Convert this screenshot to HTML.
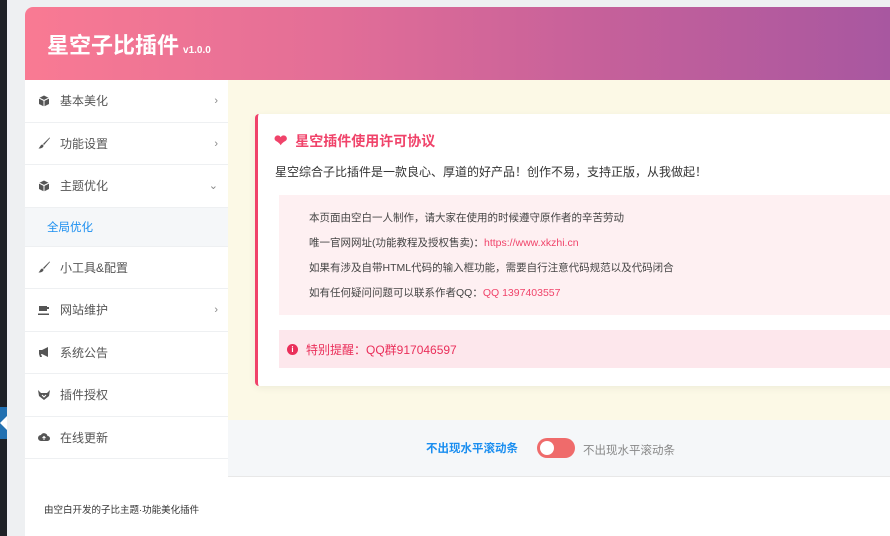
<!DOCTYPE html>
<html><head><meta charset="utf-8">
<style>
*{margin:0;padding:0;box-sizing:border-box}
html,body{width:890px;height:536px;overflow:hidden}
body{background:#eef0f2;font-family:"Liberation Sans","Noto Sans CJK SC",sans-serif;position:relative}
.dark{position:absolute;left:0;top:0;width:7px;height:536px;background:#1f2227}
.arrow{position:absolute;left:0;top:407px;width:7px;height:32px;background:#2271b1}
.arrow:after{content:"";position:absolute;left:0;top:9px;border-right:7px solid #fff;border-top:7px solid transparent;border-bottom:7px solid transparent}
.wrap{position:absolute;left:25px;top:7px;width:865px;height:529px;background:#fff;border-radius:8px 0 0 0;overflow:hidden}
.hdr{height:73px;background:linear-gradient(90deg,#f97a93 0%,#e36e97 35%,#c7619a 65%,#a857a0 100%);position:relative}
.hdr h1{position:absolute;left:22px;top:21px;color:#fff;font-size:22px;font-weight:bold}
.hdr h1 small{font-size:10px;margin-left:4px}
.side{position:absolute;left:0;top:73px;width:203px;height:397px;background:#fff}
.it{height:42.5px;border-bottom:1px solid #eef0f2;display:flex;align-items:center;padding-left:13px;font-size:12px;color:#555;position:relative}
.it .ic{width:12px;height:12px;margin-right:10px;display:inline-block;color:#555}
.it .ch{position:absolute;right:10px;top:0;line-height:42px;font-size:11px;color:#888}
.sub{height:39px;background:#f5f7f9;color:#1a8ef0;font-size:11.5px;display:flex;align-items:center;padding-left:22px;border-bottom:1px solid #eef0f2}
.main{position:absolute;left:203px;top:73px;width:672px;height:340px;background:#fcf9e6}
.card{position:absolute;left:27px;top:34px;width:650px;height:272px;background:#fff;border-left:3px solid #f0436a;border-radius:4px;box-shadow:0 2px 8px rgba(0,0,0,.06)}
.card h2{position:absolute;left:16px;top:17px;font-size:14px;color:#f0436a;font-weight:bold}
.card h2 span{font-size:16px;margin-right:4px}
.card p.l{position:absolute;left:17px;top:49px;font-size:12px;color:#333}
.box{position:absolute;left:21px;top:81px;width:640px;height:120px;background:#fef0f2;padding:11px 0 0 30px;font-size:10.5px;color:#444;line-height:25px}
.box a{color:#f0436a;text-decoration:none}
.tip{position:absolute;left:21px;top:216px;width:640px;height:38px;background:#fde7ec;padding-left:8px;font-size:12px;color:#ea2f5a;display:flex;align-items:center}
.tip i{display:inline-block;width:11px;height:11px;border-radius:50%;background:#ea2f5a;color:#fff;font-size:8px;font-style:normal;text-align:center;line-height:11px;margin-right:8px;font-weight:bold}
.bar{position:absolute;left:203px;top:413px;width:672px;height:57px;background:#f5f7f9;border-bottom:1px solid #e8e8e8}
.bar .a{position:absolute;left:198px;top:20px;font-size:11.5px;color:#1a8ef0;font-weight:bold}
.tg{position:absolute;left:309px;top:18px;width:38px;height:20px;border-radius:10px;background:#ef6b6b}
.tg:after{content:"";position:absolute;left:3px;top:3px;width:14px;height:14px;border-radius:50%;background:#fff}
.bar .b{position:absolute;left:355px;top:22px;font-size:11.5px;color:#888}
.foot{position:absolute;left:19px;top:495px;font-size:9.5px;color:#333}
</style></head><body>
<div class="dark"></div><div class="arrow"></div>
<div class="wrap">
<div class="hdr"><h1>星空子比插件<small>v1.0.0</small></h1></div>
<div class="side">
<div class="it"><svg class="ic" viewBox="0 0 12 12"><path d="M6 0.5L11 3v6L6 11.5 1 9V3z" fill="#555"/><path d="M6 5.5L11 3M6 5.5L1 3M6 5.5v6" stroke="#fff" stroke-width="1" fill="none"/></svg>基本美化<span class="ch">›</span></div>
<div class="it"><svg class="ic" viewBox="0 0 12 12"><path d="M11.5 0.5L5 7l1 1 6-7z M4.5 7.5c-2 0-2 2-4 4 3 0 5-1 5-3z" fill="#555"/></svg>功能设置<span class="ch">›</span></div>
<div class="it"><svg class="ic" viewBox="0 0 12 12"><path d="M6 0.5L11 3v6L6 11.5 1 9V3z" fill="#555"/><path d="M6 5.5L11 3M6 5.5L1 3M6 5.5v6" stroke="#fff" stroke-width="1" fill="none"/></svg>主题优化<span class="ch">⌄</span></div>
<div class="sub">全局优化</div>
<div class="it"><svg class="ic" viewBox="0 0 12 12"><path d="M11.5 0.5L5 7l1 1 6-7z M4.5 7.5c-2 0-2 2-4 4 3 0 5-1 5-3z" fill="#555"/></svg>小工具&amp;配置</div>
<div class="it"><svg class="ic" viewBox="0 0 12 12"><path d="M1 2h8v5H1z M9 3h2v2H9z M0 9.5h11v1.5H0z" fill="#555"/></svg>网站维护<span class="ch">›</span></div>
<div class="it"><svg class="ic" viewBox="0 0 12 12"><path d="M1 4h3l6-3v10L4 8H3l1 3H2L1 8z" fill="#555"/></svg>系统公告</div>
<div class="it"><svg class="ic" viewBox="0 0 12 12"><path d="M0 1l3 3h6l3-3-1 6-5 4-5-4z" fill="#555"/><path d="M4 6l2 2 2-2" stroke="#fff" fill="none"/></svg>插件授权</div>
<div class="it"><svg class="ic" viewBox="0 0 12 12"><path d="M3 10a3 3 0 0 1 0-6 3.5 3.5 0 0 1 6.5 1A2.5 2.5 0 0 1 9.5 10z" fill="#555"/><path d="M6 9V5.5M4.5 7L6 5.5 7.5 7" stroke="#fff" fill="none"/></svg>在线更新</div>
</div>
<div class="main">
<div class="card">
<h2><span>❤</span> 星空插件使用许可协议</h2>
<p class="l">星空综合子比插件是一款良心、厚道的好产品！创作不易，支持正版，从我做起！</p>
<div class="box">
本页面由空白一人制作，请大家在使用的时候遵守原作者的辛苦劳动<br>
唯一官网网址(功能教程及授权售卖)：<a>https://www.xkzhi.cn</a><br>
如果有涉及自带HTML代码的输入框功能，需要自行注意代码规范以及代码闭合<br>
如有任何疑问问题可以联系作者QQ：<a>QQ 1397403557</a>
</div>
<div class="tip"><i>i</i>特别提醒：QQ群917046597</div>
</div>
</div>
<div class="bar"><span class="a">不出现水平滚动条</span><div class="tg"></div><span class="b">不出现水平滚动条</span></div>
<div class="foot">由空白开发的子比主题·功能美化插件</div>
</div>
</body></html>
